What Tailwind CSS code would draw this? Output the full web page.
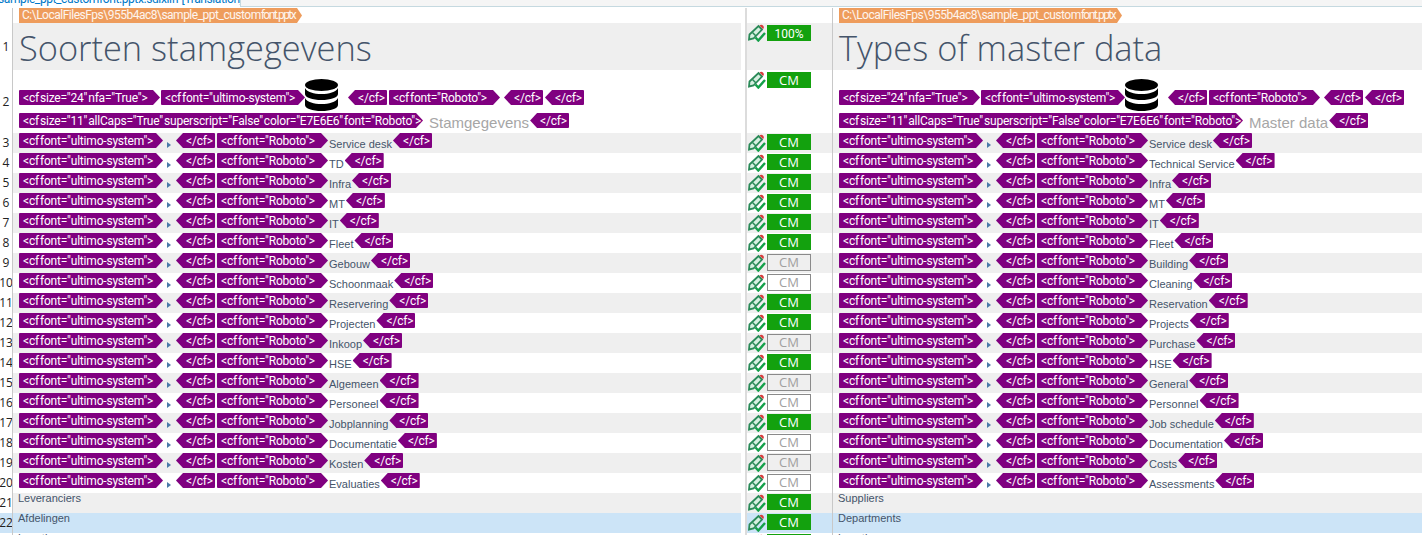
<!DOCTYPE html>
<html lang="en">
<head>
    <meta charset="UTF-8">
    <title>Translation</title>
    <script src="https://cdn.jsdelivr.net/npm/@tailwindcss/browser@4"></script>
</head>
<body class="bg-white overflow-hidden h-[535px] font-['Liberation_Sans',sans-serif]">

    <!-- Tab strip, clipped by the top of the window -->
    <div class="flex h-[7px] overflow-hidden">
        <div class="w-[241px] h-[7px] bg-white border-r border-[#c5d9e0] overflow-hidden shrink-0">
            <div class="mt-[-8px] ml-[-2px] text-[12px] leading-[15px] tracking-[-0.4px] text-[#0078c8] whitespace-nowrap font-['Roboto',sans-serif]">sample_ppt_customfont.pptx.sdlxliff [Translation]</div>
        </div>
        <div class="flex-1 h-[7px] bg-[#f5f5f5] border-b border-[#c5d9e0]"></div>
    </div>
    <div id="grid" class="mt-px"></div>

    <script>
        const SHAPE_OPEN = 'rounded-l-[1px] [clip-path:polygon(0_0,calc(100%-7px)_0,100%_50%,calc(100%-7px)_100%,0_100%)]';
        const SHAPE_CLOSE = 'rounded-r-[1px] [clip-path:polygon(7px_0,100%_0,100%_100%,7px_100%,0_50%)]';
        const TAG = 'h-[15px] shrink-0 bg-[#800080] text-white text-[12px] leading-[16px] whitespace-nowrap overflow-hidden tracking-[-0.2px] [word-spacing:-1.800px] font-[\'Roboto\',sans-serif]';

        const open = (w, text) => `<div class="${TAG} ${SHAPE_OPEN} pl-[4px]" style="width:${w}px">${text.replace(/</g, '&lt;').replace(/>/g, '&gt;')}</div>`;
        const close = (ml = 0) => `<div class="${TAG} ${SHAPE_CLOSE} pl-[10px] w-[39px]" style="margin-left:${ml}px">&lt;/cf&gt;</div>`;
        const arrow = '<div class="shrink-0 w-0 h-0 mt-[9px] ml-[4px] mr-[5px] border-y-[3px] border-l-[4px] border-y-transparent border-l-[#4a7aa8]"></div>';
        const db = `<svg class="shrink-0 w-[33px] h-[32px] mt-[-11px]" viewBox="0 0 33 32">
            <ellipse cx="16.5" cy="6" rx="16.5" ry="6"/>
            <path d="M0 9c2 4 9 6 16.500 6S31 13 33 9v6c0 3.500-7.500 6-16.500 6S0 18.500 0 15z"/>
            <path d="M0 19c2 4 9 6 16.500 6S31 23 33 19v7c0 3.500-7.500 6-16.500 6S0 29.500 0 26z"/>
        </svg>`;
        const pencil = `<svg class="shrink-0 w-[18px] h-[18px]" viewBox="0 0 18 18">
            <path d="M1.500 10.500 10.500 2l3.500 3.500-8.500 9-4.500 1z" fill="#d6efe0" stroke="#2a8a58" stroke-width="1.800"/>
            <path d="M4.500 8.500l3.500 3.500" stroke="#2a8a58" stroke-width="1.500"/>
            <path d="M11.500 1.500a2 2 0 0 1 3.500 3.500z" fill="#d83b3b"/>
            <path d="M7.500 13.500l2.800 3 6.700-7.500" fill="none" stroke="#14a04a" stroke-width="2.400"/>
        </svg>`;

        function badge(state, mt) {
            if (state === 'o') {
                return `<div class="w-[44px] h-[17px] ml-px border border-[#8a8a8a] text-[#a0a0a0] text-[13px] leading-[15px] text-center font-['Open_Sans',sans-serif]" style="margin-top:${mt}px">CM</div>`;
            }
            const text = state === 'p'
                ? '<span class="text-[12px] font-[\'Roboto\',sans-serif]">100%</span>'
                : 'CM';
            return `<div class="w-[44px] h-[16px] ml-px bg-[#13a10e] text-white text-[13px] leading-[16px] text-center font-['Open_Sans',sans-serif]" style="margin-top:${mt}px">${text}</div>`;
        }

        // one line of the grid; source and target are already rendered html
        function row(num, src, state, tgt, h, bg, numBg = '', badgeTop = 0) {
            return `<div class="flex" style="height:${h}px">
                <div class="w-3 shrink-0 flex items-center justify-center text-[12px] text-[#222] font-['Open_Sans',sans-serif] ${numBg}">${num}</div>
                <div class="w-px shrink-0 bg-[#c8c8c8]"></div>
                <div class="w-[728px] shrink-0 overflow-hidden ${bg}">${src}</div>
                <div class="w-[4px] shrink-0"></div>
                <div class="w-[2px] shrink-0 bg-[#dcdcdc]"></div>
                <div class="w-[85px] shrink-0 flex items-start pl-px pt-px ${bg}">${state ? pencil + badge(state, badgeTop) : ''}</div>
                <div class="w-px shrink-0 bg-[#c8c8c8]"></div>
                <div class="flex-1 overflow-hidden ${bg}">${tgt}</div>
            </div>`;
        }

        const filePath = 'C:\\LocalFilesFps\\955b4ac8\\sample_ppt_custom<span class="tracking-[-1.500px]">font.pptx</span>';
        const fileTag = `<div class="ml-[6px] w-[283px] h-[15px] pl-[3px] bg-[#ee9c5c] text-white/90 text-[12px] leading-[15px] tracking-[-0.5px] whitespace-nowrap overflow-hidden font-['Roboto',sans-serif] [clip-path:polygon(0_0,calc(100%-5px)_0,100%_50%,calc(100%-5px)_100%,0_100%)]">${filePath}</div>`;
        const title = t => `<div class="pl-[6px] h-[47px] text-[#44546a] text-[34.400px] leading-[50px] font-light whitespace-nowrap font-['Open_Sans',sans-serif]">${t}</div>`;

        const sz24 = '<cf size="24" nfa="True">';
        const ultimo = '<cf font="ultimo-system">';
        const roboto = '<cf font="Roboto">';
        const sz11 = '<cf size="11" allCaps="True" superscript="False" color="E7E6E6" font="Roboto">';

        const second = t => `<div class="flex items-start mt-[8px] ml-[6px]">
            ${open(404, sz11)}
            <div class="ml-[6px] mt-[2px] h-[15px] text-[15px] leading-[16px] text-[#a6a6a6] whitespace-nowrap">${t}</div>
            ${close(1)}
        </div>`;
        const head = `<div class="pt-[20px] ml-[6px] flex items-start h-[35px]">
            ${open(141, sz24)}<div class="w-px shrink-0"></div>${open(144, ultimo)}${db}
            ${close(10)}<div class="w-[2px] shrink-0"></div>${open(111, roboto)}
            ${close(4)}${close(2)}
        </div>`;
        const tags = text => `<div class="flex items-start ml-[6px] h-5">
            ${open(144, ultimo)}${arrow}${close()}<div class="w-[2px] shrink-0"></div>${open(111, roboto)}
            <div class="ml-px mt-[4px] h-4 text-[11px] leading-[15px] text-[#44546a] whitespace-nowrap">${text}</div>
            ${close(1)}
        </div>`;
        const plain = text => `<div class="pl-[5px] text-[11px] leading-[11px] text-[#44546a] whitespace-nowrap">${text}</div>`;

        const rows = [
            ['Service desk', 'Service desk', 'g'], ['TD', 'Technical Service', 'g'], ['Infra', 'Infra', 'g'],
            ['MT', 'MT', 'g'], ['IT', 'IT', 'g'], ['Fleet', 'Fleet', 'g'],
            ['Gebouw', 'Building', 'o'], ['Schoonmaak', 'Cleaning', 'o'], ['Reservering', 'Reservation', 'g'],
            ['Projecten', 'Projects', 'g'], ['Inkoop', 'Purchase', 'o'], ['HSE', 'HSE', 'g'],
            ['Algemeen', 'General', 'o'], ['Personeel', 'Personnel', 'o'], ['Jobplanning', 'Job schedule', 'g'],
            ['Documentatie', 'Documentation', 'o'], ['Kosten', 'Costs', 'o'], ['Evaluaties', 'Assessments', 'o'],
        ];

        let html = row('', fileTag, '', fileTag, 15, '');
        html += row(1, title('Soorten stamgegevens'), 'p', title('Types of master data'), 47, 'bg-[#efefef]', '', 1);
        html += row(2, head + second('Stamgegevens'), 'g', head + second('Master data'), 63, '', '', 1);
        rows.forEach(([s, t, st], i) => {
            html += row(i + 3, tags(s), st, tags(t), 20, i % 2 === 0 ? 'bg-[#efefef]' : '');
        });
        html += row(21, plain('Leveranciers'), 'g', plain('Suppliers'), 20, 'bg-[#efefef]');
        html += row(22, plain('Afdelingen'), 'g', plain('Departments'), 20, 'bg-[#cce4f7]', 'bg-[#cce4f7]');
        html += row(23, plain('Locaties'), 'g', plain('Locations'), 20, '');
        document.getElementById('grid').innerHTML = html;
    </script>

</body>
</html>
